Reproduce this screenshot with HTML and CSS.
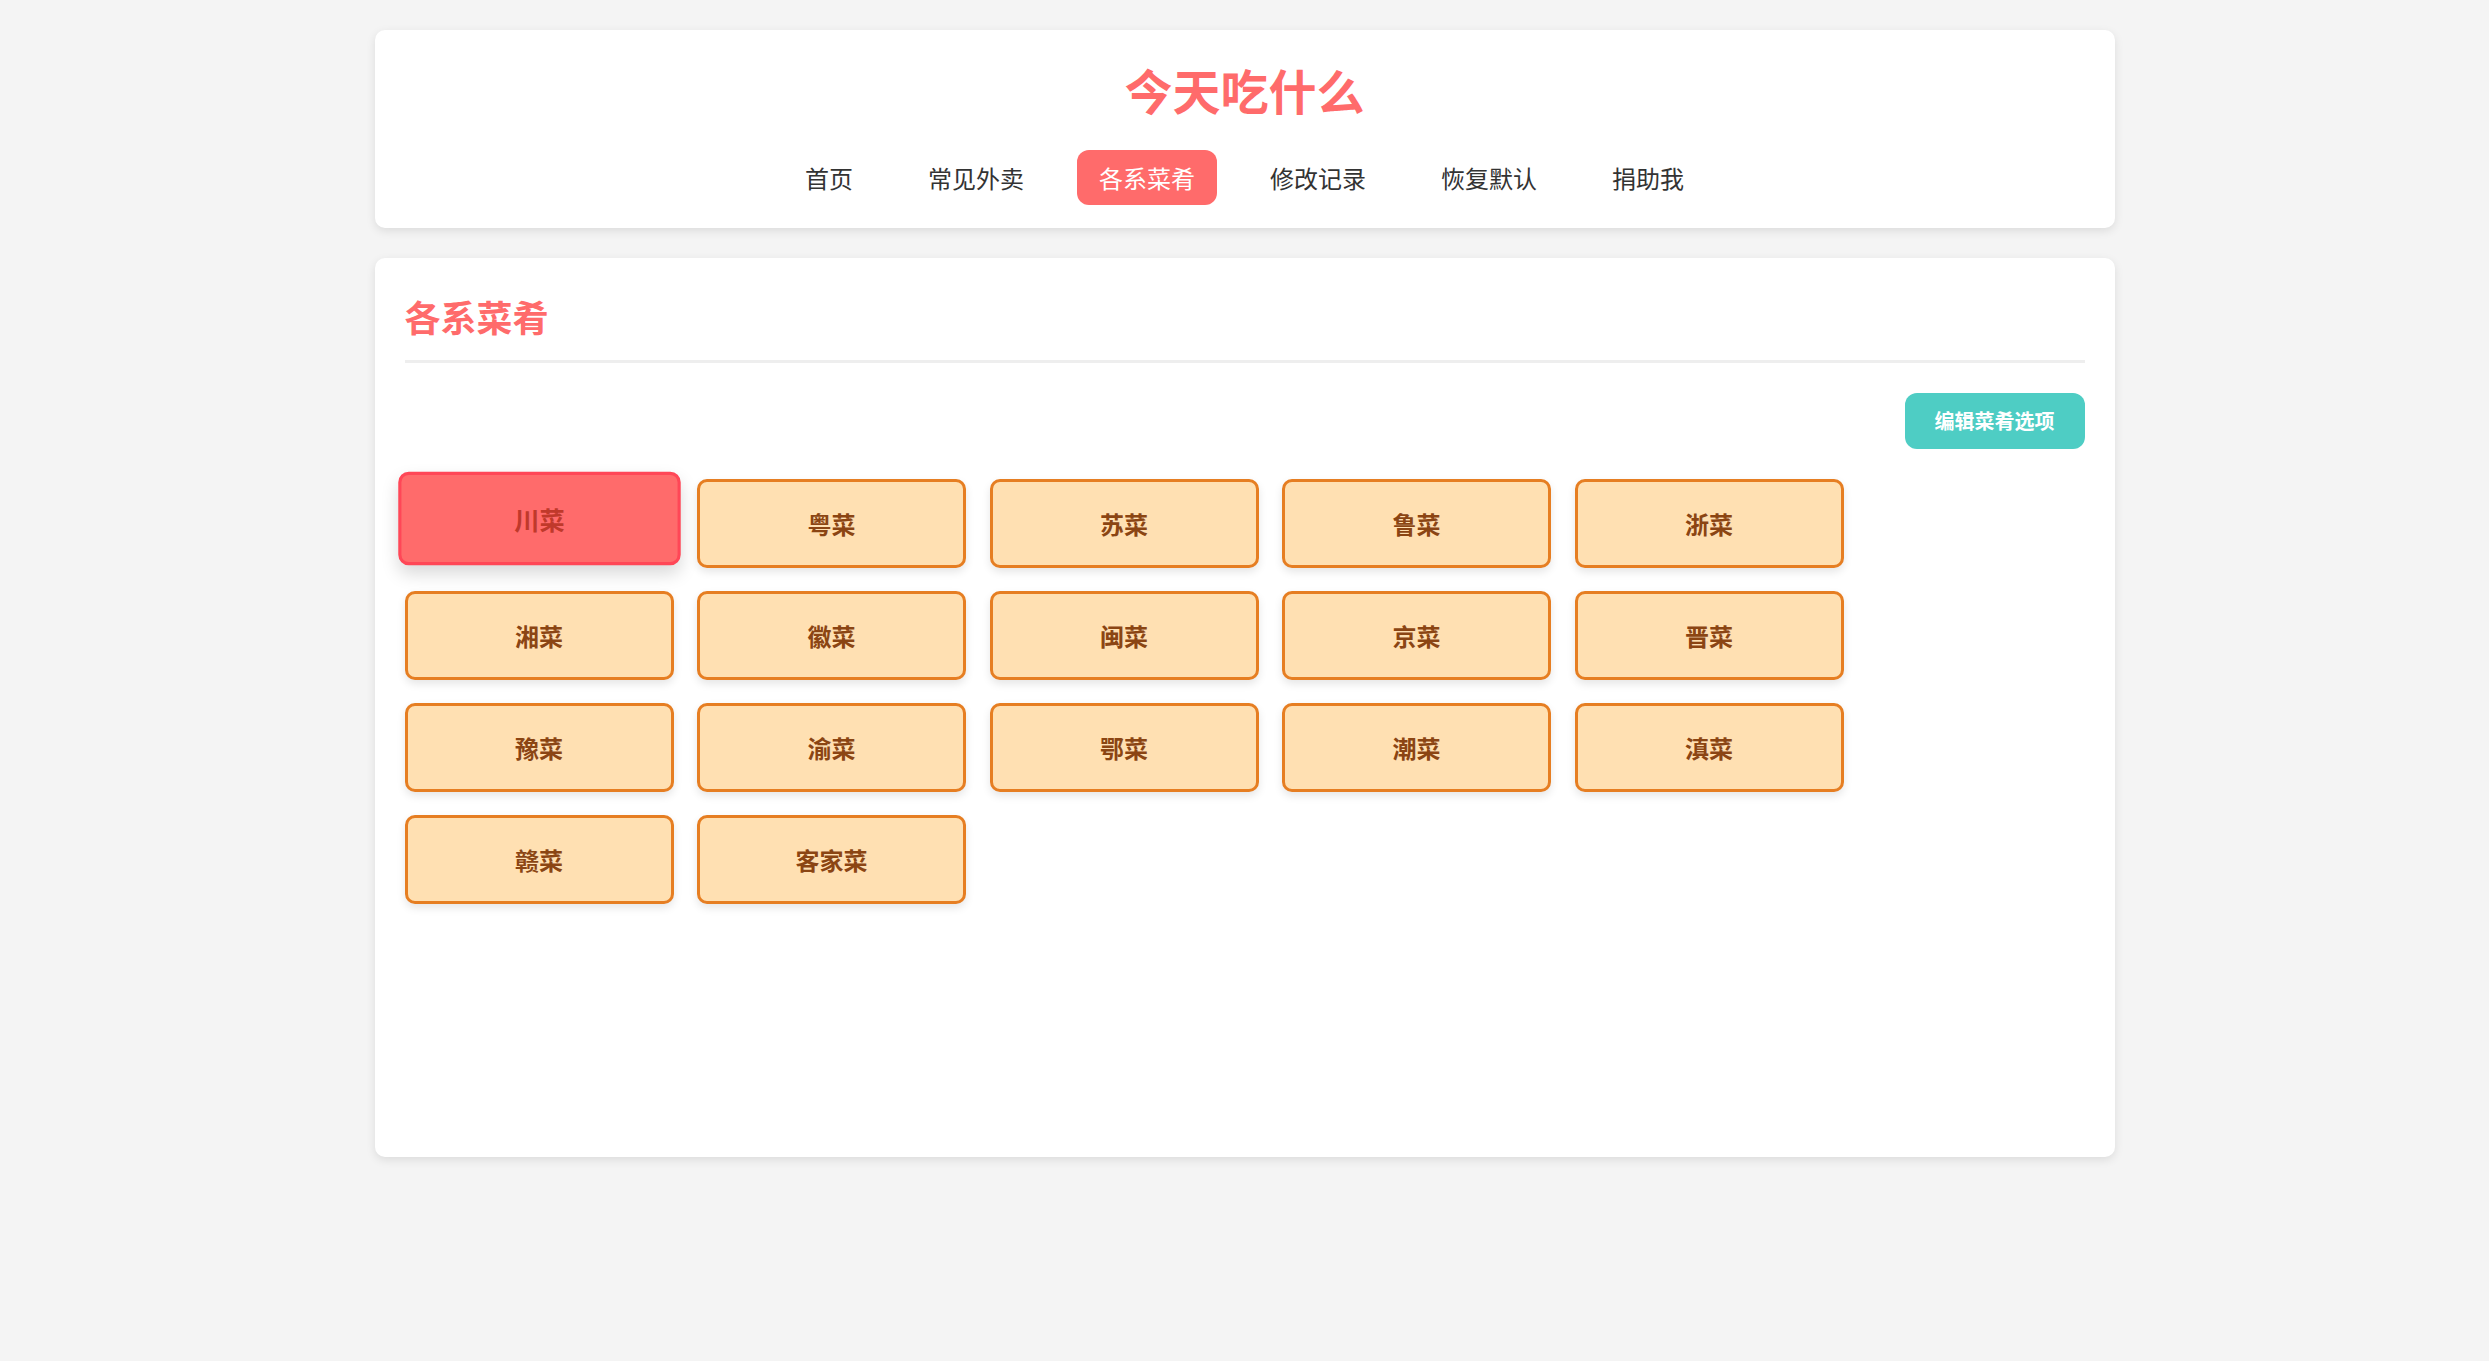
FILE: index.html
```html
<!DOCTYPE html>
<html lang="zh-CN">
<head>
<meta charset="utf-8">
<title>今天吃什么</title>
<link rel="stylesheet" href="styles.css">
</head>
<body>
  <div class="page">
    <header class="card header">
      <h1 class="title">今天吃什么</h1>
      <nav class="nav">
        <a class="nav-item">首页</a>
        <a class="nav-item">常见外卖</a>
        <a class="nav-item active">各系菜肴</a>
        <a class="nav-item">修改记录</a>
        <a class="nav-item">恢复默认</a>
        <a class="nav-item">捐助我</a>
      </nav>
    </header>

    <main class="card content">
      <h2 class="section-title">各系菜肴</h2>
      <div class="toolbar">
        <button class="edit-btn">编辑菜肴选项</button>
      </div>
      <div class="grid">
        <button class="dish selected">川菜</button>
        <button class="dish">粤菜</button>
        <button class="dish">苏菜</button>
        <button class="dish">鲁菜</button>
        <button class="dish">浙菜</button>
        <button class="dish">湘菜</button>
        <button class="dish">徽菜</button>
        <button class="dish">闽菜</button>
        <button class="dish">京菜</button>
        <button class="dish">晋菜</button>
        <button class="dish">豫菜</button>
        <button class="dish">渝菜</button>
        <button class="dish">鄂菜</button>
        <button class="dish">潮菜</button>
        <button class="dish">滇菜</button>
        <button class="dish">赣菜</button>
        <button class="dish">客家菜</button>
      </div>
    </main>
  </div>
</body>
</html>
```

FILE: styles.css
```css
* {
  box-sizing: border-box;
}

html, body {
  margin: 0;
  padding: 0;
}

body {
  background: #f4f4f4;
  font-family: "Noto Sans CJK SC", "Noto Sans", "Liberation Sans", sans-serif;
  color: #333;
}

.page {
  width: 1740px;
  margin: 0 auto;
  padding-top: 30px;
  padding-bottom: 40px;
}

.card {
  background: #ffffff;
  border-radius: 10px;
  box-shadow: 0 3px 10px rgba(0, 0, 0, 0.1);
}

.header {
  padding: 31px 20px 23px;
  display: flex;
  flex-direction: column;
  align-items: center;
}

.title {
  margin: 0;
  font-size: 48px;
  line-height: 1.2;
  font-weight: 700;
  color: #ff6b6b;
}

.nav {
  margin-top: 31px;
  display: flex;
  gap: 31px;
}

.nav-item {
  display: block;
  padding: 10px 22px;
  font-size: 24px;
  line-height: 35px;
  color: #333;
  border-radius: 12px;
  text-decoration: none;
}

.nav-item.active {
  background: #ff6b6b;
  color: #ffffff;
}

.content {
  margin-top: 30px;
  height: 899px;
  padding: 30px;
}

.section-title {
  margin: 0;
  padding: 7px 0 22px;
  font-size: 36px;
  line-height: 1.2;
  font-weight: 700;
  color: #ff6b6b;
  border-bottom: 3px solid #eeeeee;
}

.toolbar {
  display: flex;
  justify-content: flex-end;
  margin-top: 30px;
}

.edit-btn {
  border: none;
  background: #4ecdc4;
  color: #ffffff;
  font-family: inherit;
  font-size: 20px;
  font-weight: 700;
  line-height: 28px;
  padding: 14px 30px;
  border-radius: 12px;
}

.grid {
  margin-top: 30.5px;
  display: flex;
  flex-wrap: wrap;
  row-gap: 23px;
  column-gap: 23.5px;
  width: 1460px;
}

.dish {
  width: 269px;
  height: 89px;
  background: #ffe0b2;
  border: 3px solid #e67e22;
  border-radius: 10px;
  color: #8b4513;
  font-family: inherit;
  font-size: 24px;
  font-weight: 700;
  box-shadow: 0 4px 8px rgba(0, 0, 0, 0.1);
  padding: 0;
}

.dish.selected {
  background: #ff6b6b;
  border-color: #ff4757;
  color: #c0392b;
  transform: translateY(-5px) scale(1.05);
  box-shadow: 0 8px 16px rgba(0, 0, 0, 0.15);
}
```
